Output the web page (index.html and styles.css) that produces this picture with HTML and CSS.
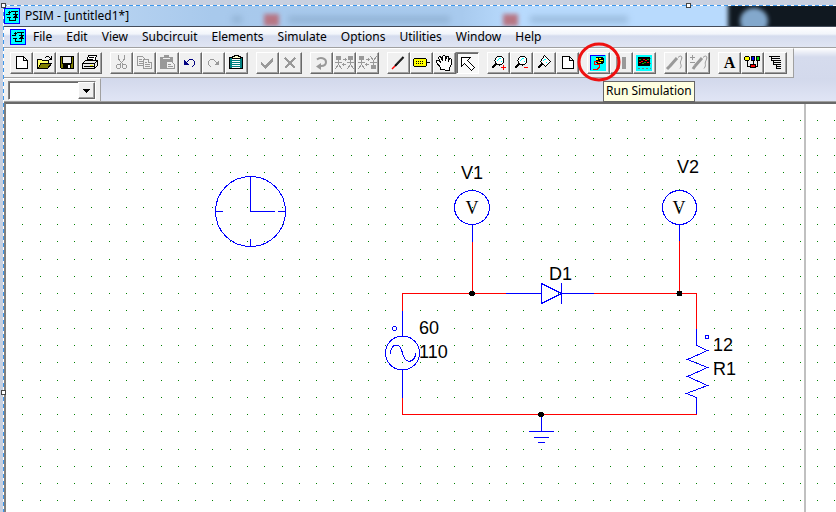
FILE: index.html
```html
<!DOCTYPE html>
<html lang="en">
<head>
<meta charset="utf-8">
<title>PSIM - [untitled1*]</title>
<link rel="stylesheet" href="styles.css">
</head>
<body>
<svg class="defs" aria-hidden="true">
  <symbol id="logo" viewBox="0 0 16 16">
    <path d="M0 0h16v16H0z" fill="#00f"/><path d="M1 1h14v14H1z" fill="#0ff"/>
    <path d="M4 4.500h3M5.500 3v3M2 6.500h4M3 9.500h4M5.500 9v4M5 12.500h7M7 3.500h7M11.500 3v10M9 6.500h5M9 9.500h5M10 8.500h3M11 7.500h2" stroke="#000" fill="none"/>
  </symbol>
  <symbol id="page" viewBox="0 0 23 22"><path d="M6.500 4.500h7l4 4v8h-11zM13.500 4.500v4h4" fill="#fff" stroke="#000"/></symbol>
  <symbol id="lens" viewBox="0 0 23 22">
    <circle cx="12.500" cy="8.500" r="4.500" fill="#fff" stroke="#000"/>
    <path d="M10 8.500h1M11 7.500h1M12 6.500h2M14 9.500h1" stroke="#0ff"/>
    <path d="M9.500 11.500L5 16" stroke="#000" stroke-width="2"/>
  </symbol>
  <symbol id="person" viewBox="0 0 9 15">
    <circle cx="4.500" cy="3" r="2.500" fill="#999"/><path d="M4.500 5v5M1 7.500h7M4.500 9l-3 5M4.500 9l3 5" stroke="#999" fill="none"/>
  </symbol>
</svg>

<div class="screen">
  <div class="app">
    <header class="titlebar">
      <div class="backdrop" aria-hidden="true"><i class="smudge s1"></i><i class="red r1"></i><i class="smudge s2"></i><i class="red r2"></i><i class="smudge s3"></i><i class="night"></i><i class="glow"></i></div>
      <svg class="logo"><use href="#logo"/></svg>
      <h1>PSIM - [untitled1*]</h1>
    </header>

    <nav class="menubar" aria-label="Main menu">
      <svg class="logo"><use href="#logo"/></svg>
      <button>File</button><button>Edit</button><button>View</button><button>Subcircuit</button><button>Elements</button><button>Simulate</button><button>Options</button><button>Utilities</button><button>Window</button><button>Help</button>
    </nav>

    <div class="dock">
    <div class="toolbar" role="toolbar" aria-label="Tools">
      <div class="group">
        <button aria-label="New"><svg viewBox="0 0 23 22"><use href="#page"/></svg></button>
        <button aria-label="Open"><svg viewBox="0 0 23 22"><path d="M4.500 16.500v-9h4l1 1h6v3" fill="#ff6" stroke="#000"/><path d="M5 16.500l3-5h10.500l-4 5z" fill="#808000" stroke="#000"/><path d="M12 5.500h1M13 4.500h3M16 5.500h1M17 6.500h2M18.500 4v3M16 7.500h3" stroke="#000"/></svg></button>
        <button aria-label="Save"><svg viewBox="0 0 23 22"><path d="M4.500 4.500h13v12h-12l-1-1z" fill="#808000" stroke="#000"/><path d="M7 5h8v6H7z" fill="#f0f0f0"/><path d="M6.500 5v6h9V5" fill="none" stroke="#000"/><path d="M7 12h8v4H7z"/><path d="M12 13h2v3h-2z" fill="#fff"/></svg></button>
        <button aria-label="Print"><svg viewBox="0 0 23 22"><path d="M7.500 9.500l2-6h8l-2 6" fill="#fff" stroke="#000"/><path d="M10 5.500h5M9 7.500h5" stroke="#000"/><path d="M3.500 11.500l3-3h12v5l-3 3h-12z" fill="#e8e8e8" stroke="#000"/><path d="M4 11.500h12M15.500 12v4M16 11l2-2M5 14.500h10" stroke="#000"/><path d="M11 13h3v1h-3z" fill="#ee0"/></svg></button>
      </div>
      <div class="group">
        <button aria-label="Cut" disabled><svg viewBox="0 0 23 22" fill="none" stroke="#999"><path d="M8.500 3v4l5 6M14.500 3v4l-5 6" /><circle cx="8.500" cy="14.500" r="2"/><circle cx="14.500" cy="14.500" r="2"/></svg></button>
        <button aria-label="Copy" disabled><svg viewBox="0 0 23 22" fill="#f0f0f0" stroke="#999"><path d="M4.500 4.500h5l3 3v6h-8z"/><path d="M6 7.500h3M6 9.500h4M6 11.500h4"/><path d="M10.500 7.500h5l3 3v6h-8z"/><path d="M15.500 7.500v3h3M12 10.500h2M12 12.500h5M12 14.500h5"/></svg></button>
        <button aria-label="Paste" disabled><svg viewBox="0 0 23 22"><path d="M4 5h4V3h5v2h4v12H4z" fill="#999"/><path d="M7 6.500h7" stroke="#eee"/><path d="M10.500 9.500h5l3 3v4h-8z" fill="#f0f0f0" stroke="#999"/><path d="M12 12.500h3M12 14.500h5" stroke="#999"/></svg></button>
        <button aria-label="Undo"><svg viewBox="0 0 23 22"><path d="M5 8v5h5z" fill="#000080"/><path d="M7 10.500h1M8 9.500h1M9 8.500h1M10 7.500h4M14 8.500h1M15.500 9v4M14 13.500h1M13 14.500h1" fill="none" stroke="#000080"/></svg></button>
        <button aria-label="Redo" disabled><svg viewBox="0 0 23 22"><path d="M17 8v5h-5z" fill="#999"/><path d="M14 10.500h1M13 9.500h1M12 8.500h1M8 7.500h4M7 8.500h1M6.500 9v4M7 13.500h1M8 14.500h1" fill="none" stroke="#999"/></svg></button>
        <button aria-label="Clipboard"><svg viewBox="0 0 23 22"><path d="M4.500 5.500h13v11h-13z" fill="#008080" stroke="#000"/><path d="M7 7h8v9H7z" fill="#fff"/><path d="M7 8.500h8M7 10.500h8M7 12.500h8M7 14.500h8" stroke="#008080"/><path d="M7.500 6.500v-2h2v-1h4v1h2v2z" fill="#ffc" stroke="#000"/></svg></button>
      </div>
      <div class="group">
        <button aria-label="Accept" disabled><svg viewBox="0 0 23 22"><path d="M5 10l4 3 8-7v3l-8 8-4-5z" fill="#999"/></svg></button>
        <button aria-label="Cancel" disabled><svg viewBox="0 0 23 22"><path d="M6 6l10 10M16 6L6 16" stroke="#999" stroke-width="2"/></svg></button>
      </div>
      <div class="group">
        <button aria-label="Rotate" disabled><svg class="smooth" viewBox="0 0 23 22"><path d="M7 7.500C10 5 16 6 16 10c0 3-2 4-5 4" fill="none" stroke="#999" stroke-width="2"/><path d="M11 11v7l-5-3.500z" fill="#999"/></svg></button>
        <button aria-label="Flip left to right" disabled><svg viewBox="0 0 23 22"><use href="#person" x="1" y="3" width="9" height="15"/><use href="#person" x="13" y="3" width="9" height="15"/><path d="M10 7.500h4M12.500 6v3M9 12.500h4M10.500 11v3" stroke="#999"/></svg></button>
        <button aria-label="Flip top to bottom" disabled><svg viewBox="0 0 23 22"><use href="#person" x="1" y="3" width="9" height="15"/><g transform="translate(0 21) scale(1 -1)"><use href="#person" x="13" y="3" width="9" height="15"/></g><path d="M10 7.500h4M12.500 6v3M9 12.500h4M10.500 11v3" stroke="#999"/></svg></button>
      </div>
      <div class="group">
        <button aria-label="Wire"><svg class="smooth" viewBox="0 0 23 22"><path d="M8 14L16.500 5" stroke="#000" stroke-width="2"/><path d="M9 12.500l7-7" stroke="#888" stroke-width=".5"/><path d="M5 17l3-3" stroke="red" stroke-width="1.500"/></svg></button>
        <button aria-label="Label"><svg viewBox="0 0 23 22"><path d="M3.500 7.500l1-1h11l1 1v6l-1 1h-11l-1-1z" fill="#ff0" stroke="#000"/><path d="M17 10.500h3M6 9.500h1M8 9.500h1M10 9.500h1M12 9.500h1M6 11.500h1M8 11.500h1M10 11.500h1M12 11.500h1" stroke="#000"/></svg></button>
        <button aria-label="Pan"><svg viewBox="0 0 23 22"><path d="M7.500 17.500v-2l-4-5v-2h2l2 2-2-5 1-1h1l2 4V4.500l1-1h1l1 1v4l1-4h2v5l1-3h1l1 1v5l-2 3v3z" fill="#fff" stroke="#000"/></svg></button>
        <button aria-label="Select" class="pressed"><svg viewBox="0 0 23 22"><path d="M5.500 5.500h9l-3 3 7 7-3 3-7-7-3 3z" fill="#fff" stroke="#000"/></svg></button>
      </div>
      <div class="group">
        <button aria-label="Zoom in"><svg viewBox="0 0 23 22"><use href="#lens"/><path d="M14 15.500h5M16.500 13v5" stroke="red"/></svg></button>
        <button aria-label="Zoom out"><svg viewBox="0 0 23 22"><use href="#lens"/><path d="M14 15.500h4" stroke="red"/></svg></button>
        <button aria-label="Zoom to area"><svg viewBox="0 0 23 22"><path d="M11.500 3.500l6 6-5 5-5-5z" fill="#fff" stroke="#000"/><path d="M10 8.500h1M11 7.500h2M13 10.500h1" stroke="#0ff"/><path d="M9.500 11.500L5 16" stroke="#000" stroke-width="2"/></svg></button>
        <button aria-label="Fit to page"><svg viewBox="0 0 23 22"><use href="#page"/></svg></button>
      </div>
      <div class="group">
        <div class="callout">
          <button aria-label="Run Simulation" aria-describedby="tip"><svg viewBox="0 0 23 22"><path d="M3 3h16v16H3z" fill="#0ff"/><path d="M3.500 18V3.500H18" fill="none" stroke="#00f"/><path d="M9 5h6l2 2v4l-3 1h-3l-2-1V7z"/><path d="M9 6h2v2H9zM12 6h2v1h-2zM13 8h3v1h-3zM11 10h3v1h-3z" fill="#ff0"/><path d="M12 9.500H7.500v3H12v3L10.500 17H6" fill="none" stroke="red"/></svg></button>
          <svg class="ring" viewBox="0 0 44 40" aria-hidden="true"><ellipse cx="22" cy="20" rx="20" ry="18"/></svg>
          <span class="tooltip" role="tooltip" id="tip">Run Simulation</span>
        </div>
        <button aria-label="Pause" disabled><svg viewBox="0 0 23 22"><path d="M6 5h4v12H6zM12 5h4v12h-4z" fill="#999"/></svg></button>
        <button aria-label="Run SIMVIEW"><svg viewBox="0 0 23 22"><path d="M3 3h16v16H3z" fill="#0ff"/><path d="M5 5h12v9H5z"/><path d="M6 10.500h2M8 9.500h2M10 7.500h2M12 8.500h2M14 10.500h2" stroke="red"/><path d="M6 7.500h2M9 11.500h2M11 10.500h2M14 7.500h2" stroke="#0a0"/><path d="M5 16.500h2M9 16.500h2M13 16.500h2M17.500 6v1M17.500 11v1M17 16.500h1" stroke="#777"/></svg></button>
      </div>
      <div class="group">
        <button aria-label="Probe" disabled><svg class="smooth" viewBox="0 0 23 22"><path d="M3 17l3-3M6 14l7-8" stroke="#999" stroke-width="3"/><path d="M14 5.500c3-3 5-1 3 3s2 4-1 8" stroke="#999" fill="none"/></svg></button>
        <button aria-label="Differential probe" disabled><svg class="smooth" viewBox="0 0 23 22"><path d="M6 17l2-3M8 14l7-8" stroke="#999" stroke-width="3"/><path d="M16 5.500c3-3 5-1 3 3s1 4-2 8M3 5.500h5M5.500 3v5M3 10.500h5" stroke="#999" fill="none"/></svg></button>
      </div>
      <div class="group">
        <button aria-label="Text" class="letter">A</button>
        <button aria-label="Colors"><svg viewBox="0 0 23 22"><path d="M6.500 9v5.500h10V9M12.500 9v4" fill="none" stroke="#000"/><circle cx="6" cy="6.500" r="2.500" fill="#ff0" stroke="#000"/><path d="M10.500 4.500h3v4h-3z" fill="#00f" stroke="#000"/><path d="M15.500 4.500h3v4h-3z" fill="#0c0" stroke="#000"/><path d="M9.500 12.500h5v3h-5z" fill="red" stroke="#000"/></svg></button>
        <button aria-label="List"><svg viewBox="0 0 23 22"><path d="M5 4.500h11M7 6.500h9M8 8.500h9M10 10.500h7M10 12.500h7M12 14.500h5M12 16.500h5M7.500 4v5M9.500 8v5M12.500 12v5" fill="none" stroke="#000"/></svg></button>
      </div>
    </div>
    </div>

    <div class="combo-row">
      <div class="combo-band">
        <div class="combo">
          <select aria-label="Component"><option></option></select>
          <span class="drop" aria-hidden="true"><svg viewBox="0 0 7 4"><path d="M0 0h7v1H6v1H5v1H4v1H3V3H2V2H1V1H0z"/></svg></span>
        </div>
      </div>
    </div>

    <main class="workspace">
      <svg class="schematic" role="img" aria-label="Rectifier circuit">
        <g transform="translate(-6 -104)">
          <path id="grid" class="grid"/>
          <path class="edge" d="M805 104V4000"/>
          <g class="part">
            <circle cx="250.500" cy="211.500" r="35"/>
            <path d="M250.500 177v34.500H275M215 211.500h8M278 211.500h8M250.500 239v8"/>
            <ellipse cx="472" cy="207.500" rx="17.500" ry="17"/>
            <circle cx="679.500" cy="207.500" r="17"/>
            <path d="M472.500 225v17M679.500 225v16M402.500 311v26M402.500 369v29M506 293.500h36M561 293.500h33"/>
            <path d="M541.500 283.500l20 10-20 10zM561.500 283v21"/>
            <circle cx="402.500" cy="353" r="17"/>
            <path d="M390.500 354C391 343 400 342 402.500 353S414 364 416 353"/>
            <circle cx="394.500" cy="328.500" r="2"/>
            <path d="M696.500 329v16.500l11 5-20 9 20 8-20 9 20 9-21 8 10 4V414"/>
            <circle cx="707" cy="337" r="2"/>
            <path d="M541.500 414v17M529 431.500h25M534 437.500h15M538 442.500h7"/>
          </g>
          <path class="wire" d="M402.500 311v-17.500H506M472.500 242v51M594 293.500h102.500V329M679.500 241v52M402.500 398v16.500h294"/>
          <g class="node"><circle cx="472" cy="293.500" r="3"/><circle cx="679.500" cy="293.500" r="3"/><circle cx="541" cy="414.500" r="3"/></g>
          <g class="text">
            <text x="461" y="179">V1</text><text x="677" y="173">V2</text><text x="549" y="280">D1</text>
            <text x="419" y="334">60</text><text x="419" y="358">110</text>
            <text x="713" y="351">12</text><text x="713" y="375">R1</text>
          </g>
          <g class="meter"><text x="472" y="214">V</text><text x="679" y="214">V</text></g>
        </g>
      </svg>
    </main>
  </div>
  <div class="selection" aria-hidden="true"><i class="handle corner"></i><i class="handle top"></i><i class="handle side"></i></div>
</div>
<script src="grid.js"></script>
</body>
</html>
```
FILE: styles.css
```css
* { box-sizing: border-box; }
body { margin: 0; background: #c8d0e0; font: 12px/16px "Noto Sans", "Open Sans", sans-serif; color: #000; }
button { font: inherit; color: inherit; padding: 0; border: 0; background: none; }
svg { display: block; shape-rendering: crispEdges; }
.smooth { shape-rendering: auto; }
.defs { position: absolute; width: 0; height: 0; }

.screen { position: relative; min-height: 100vh; padding: 6px 0 0 4px; display: flex; overflow: hidden; }
.app { flex: 1; min-width: 0; display: flex; flex-direction: column; }
.logo { width: 16px; height: 16px; flex: none; }

.titlebar { position: relative; display: flex; align-items: center; gap: 5px; height: 20px; overflow: hidden; background: linear-gradient(90deg, #c5dcf5 0, #a8c9ec 25%, #a8caee 55%, #b8dafd 61%); }
.titlebar h1 { margin: 0; font-size: 12px; font-weight: 400; line-height: 18px; }
.titlebar .logo, .titlebar h1 { position: relative; }
.backdrop { position: absolute; inset: 0; }
.backdrop i { position: absolute; filter: blur(2px); }
.backdrop .smudge { top: 10px; height: 7px; background: #7c9dbd; opacity: .5; filter: blur(3px); }
.s1 { left: 228px; width: 10px; }
.s2 { left: 284px; width: 162px; }
.s3 { left: 526px; width: 98px; }
.red { top: 8px; width: 15px; height: 12px; background: #b77583; }
.r1 { left: 260px; }
.r2 { left: 499px; }
.night { left: 724px; right: -8px; top: -4px; bottom: -4px; background: #101820; }
.glow { left: 736px; top: 2px; width: 28px; height: 26px; border-radius: 50%; background: #83a8cc; }

.menubar { display: flex; align-items: center; gap: 14px; height: 21px; padding-left: 6px; border-top: 1px solid #444c5a; background: linear-gradient(#fff 0, #f2f5fb 35%, #d5dcee 45%, #e0e5f3 100%); }
.menubar .logo { margin-right: -7px; }

.dock { display: flex; border-top: 1px solid #a0a0a0; background: linear-gradient(#fff, #d5dbed 9px, #d3d9ec); }
.toolbar { display: flex; gap: 8px; padding: 3px 6px; background: #f0f0f0; border-top: 1px solid #fff; border-right: 1px solid #a0a0a0; border-bottom: 1px solid #a0a0a0; }
.group { display: flex; }
.group button { display: block; width: 23px; height: 22px; border: 1px solid; border-color: #fff #696969 #696969 #fff; box-shadow: inset -1px -1px #a0a0a0; background: #f0f0f0; }
.group svg { width: 23px; height: 22px; margin: -1px; }
.group button.pressed { border-color: #808080 #fff #fff #808080; box-shadow: inset 1px 1px #696969; background: #f8f8f8; }
.group button.letter { font: bold 16px/20px "Liberation Serif", serif; text-align: center; }
.callout { position: relative; z-index: 2; }
.group .ring { position: absolute; left: -10px; top: -10px; width: 44px; height: 40px; margin: 0; z-index: 2; shape-rendering: auto; pointer-events: none; }
.ring ellipse { fill: none; stroke: #ee1111; stroke-width: 3; }
.tooltip { position: absolute; left: 16px; top: 29px; padding: 0 2px 1px; border: 1px solid #666; background: #ffffe1; white-space: nowrap; line-height: 18px; }

.combo-row { display: flex; height: 24px; background: linear-gradient(#d2d8eb, #e0e5f5); border-bottom: 1px solid #a0a0a0; }
.combo-band { padding: 2px 4px; background: #f0f0f0; border-top: 1px solid #fff; border-right: 1px solid #a0a0a0; }
.combo { position: relative; width: 88px; height: 19px; }
.combo select { display: block; appearance: none; width: 100%; height: 100%; border: 1px solid; border-color: #808080 #fff #fff #808080; box-shadow: inset 1px 1px #696969; border-radius: 0; background: #fff; }
.drop { position: absolute; right: 1px; top: 1px; width: 17px; height: 17px; display: grid; place-items: center; background: #f0f0f0; border: 1px solid; border-color: #fff #696969 #696969 #fff; box-shadow: inset -1px -1px #a0a0a0; pointer-events: none; }
.drop svg { width: 7px; height: 4px; }

.workspace { flex: 1; display: flex; background: #fff; border-top: 2px solid #696969; border-left: 2px solid #808080; }
.schematic { width: 100%; flex: 1; min-height: 400px; }
.grid { stroke: #008000; fill: none; }
.edge { stroke: #c0c0c0; stroke-width: 2; }
.part { stroke: #00f; fill: none; }
.wire { stroke: #f00; fill: none; }
.text { font: 18px "Liberation Sans", Arial, sans-serif; }
.meter { font: 18px "Liberation Serif", serif; text-anchor: middle; }

.selection { position: absolute; inset: 5px 0 0 3px; pointer-events: none; background: repeating-linear-gradient(90deg, #3b96ec 0 4px, #fff 4px 7px) 0 0 / 100% 1px no-repeat, repeating-linear-gradient(#3b96ec 0 4px, #fff 4px 7px) 0 0 / 1px 100% no-repeat; }
.handle { position: absolute; width: 5px; height: 5px; background: #fff; border: 1px solid #444; }
.corner { left: -2px; top: -2px; }
.top { left: 82%; top: -2px; }
.side { left: -2px; top: 76%; }
```
FILE: grid.js
```js
// Dot grid, snapped to whole pixels at a pitch of 17.28.
const PITCH = 17.28;
let d = "";
for (let row = 0; row < 60; row++) {
  const y = Math.round(120.3 + row * PITCH) + 0.5;
  for (let col = 0; col < 120; col++) {
    d += `M${Math.round(22.3 + col * PITCH)} ${y}h1`;
  }
}
document.getElementById("grid").setAttribute("d", d);
```
